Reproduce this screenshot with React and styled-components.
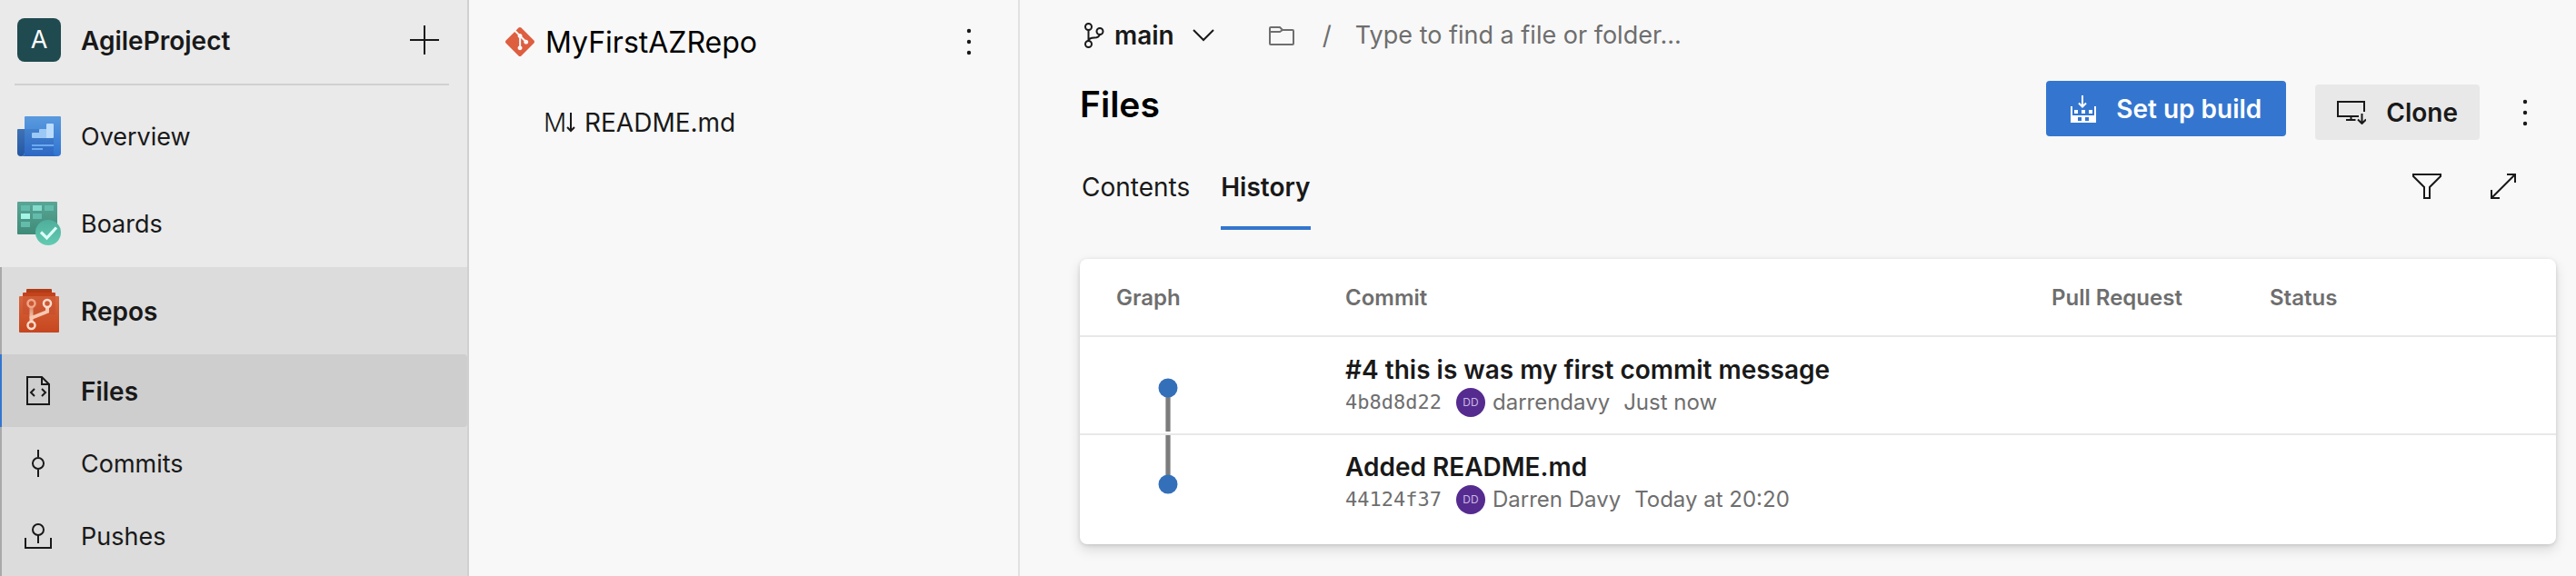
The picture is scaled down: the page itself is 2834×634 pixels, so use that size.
import React from "react";
import styled, { createGlobalStyle, css } from "styled-components";
import { SiGit } from "react-icons/si";

const GlobalStyle = createGlobalStyle`
  *, *::before, *::after { box-sizing: border-box; }
  body {
    margin: 0;
    background: #f8f8f8;
    color: #191919;
    font-family: Inter, "Liberation Sans", sans-serif;
    font-size: 28px;
    line-height: 36px;
  }
  button, input { font: inherit; color: inherit; }
  svg { display: block; flex: none; }
`;

const Page = styled.div`
  display: flex;
  min-height: 100vh;
`;

/* ---------- project sidebar ---------- */

const Sidebar = styled.aside`
  flex: none;
  width: 516px;
  display: flex;
  flex-direction: column;
  background: #eaeaea;
  border-right: 2px solid #d0d0d0;
`;

const ProjectHeader = styled.div`
  display: flex;
  align-items: center;
  height: 94px;
  margin: 0 20px 8px 16px;
  padding: 0 11px 4px 3px;
  border-bottom: 2px solid #d0d0d0;
`;

const ProjectBadge = styled.span`
  display: flex;
  align-items: center;
  justify-content: center;
  width: 48px;
  height: 48px;
  margin-right: 22px;
  border-radius: 8px;
  background: #1f4a4f;
  color: #fff;
  font-size: 27px;
`;

const ProjectName = styled.a`
  flex: 1;
  padding-top: 2px;
  color: inherit;
  font-weight: 600;
  text-decoration: none;
`;

const IconButton = styled.button`
  display: flex;
  align-items: center;
  justify-content: center;
  padding: 0;
  border: 0;
  background: none;
  cursor: pointer;
`;

const NavLink = styled.a`
  display: flex;
  align-items: center;
  height: ${(p) => (p.$sub ? 80 : 96)}px;
  color: inherit;
  font-size: ${(p) => (p.$strong ? 28 : 27)}px;
  font-weight: ${(p) => (p.$strong ? 600 : 400)};
  text-decoration: none;
  border-left: 2px solid transparent;
  ${(p) =>
    p.$current &&
    css`
      background: #cecece;
      border-left-color: #3476cf;
      border-radius: 0 4px 4px 0;
    `}
`;

const NavIcon = styled.span`
  display: flex;
  justify-content: center;
  width: ${(p) => (p.$sub ? 80 : 82)}px;
  margin-right: ${(p) => (p.$sub ? 7 : 5)}px;
`;

const NavLabel = styled.span`
  padding-top: 2px;
`;

const NavGroup = styled.div`
  flex: 1;
  background: linear-gradient(to right, #a9a9a9 2px, #dcdcdc 2px);
`;

/* ---------- file tree ---------- */

const Tree = styled.section`
  flex: none;
  width: 606px;
  border-right: 2px solid #e1e1e1;
`;

const RepoHeader = styled.div`
  display: flex;
  align-items: center;
  height: 92px;
  padding: 0 51px 0 40px;
`;

const RepoName = styled.h2`
  flex: 1;
  margin: 0 0 0 12px;
  padding-top: 2px;
  color: #000;
  font-size: 32px;
  font-weight: 400;
`;

const FileLink = styled.a`
  display: flex;
  align-items: center;
  height: 86px;
  padding-left: 82px;
  color: inherit;
  text-decoration: none;
`;

const MarkdownMark = styled.span`
  display: flex;
  align-items: center;
  width: 34px;
  margin-right: 11px;
  font-weight: 300;
`;

/* ---------- main column ---------- */

const Main = styled.main`
  flex: 1;
  min-width: 0;
  padding: 0 22px 35px 66px;
`;

const PathBar = styled.div`
  display: flex;
  align-items: center;
  height: 78px;
  color: #6e6e6e;
`;

const BranchButton = styled.button`
  display: flex;
  align-items: center;
  margin-right: 60px;
  padding: 0 0 0 5px;
  border: 0;
  background: none;
  color: #191919;
  font-weight: 600;
  cursor: pointer;
`;

const BranchName = styled.span`
  margin: 0 20px 0 11px;
`;

const Slash = styled.span`
  margin: 0 26px 0 31px;
`;

const PathInput = styled.input`
  flex: 1;
  min-width: 0;
  padding: 0;
  border: 0;
  outline: 0;
  background: none;
  font-size: 27px;
  &::placeholder { color: #6e6e6e; opacity: 1; }
`;

const TitleBar = styled.div`
  display: flex;
  gap: 32px;
  height: 65px;
  margin-top: 11px;
  padding-right: 16px;
`;

const Title = styled.h1`
  flex: 1;
  margin: 0;
  color: #000;
  font-size: 39px;
  font-weight: 600;
  line-height: 52px;
`;

const Actions = styled.div`
  display: flex;
  align-self: ${(p) => (p.$low ? "flex-end" : "flex-start")};
  align-items: center;
  gap: 32px;
`;

const Button = styled.button`
  display: flex;
  align-items: center;
  height: 61px;
  gap: 22px;
  padding: 0 ${(p) => (p.$primary ? 27 : 24)}px;
  border: 0;
  border-radius: 4px;
  background: ${(p) => (p.$primary ? "#3476cf" : "#e8e8e8")};
  color: ${(p) => (p.$primary ? "#fff" : "#191919")};
  font-weight: 600;
  white-space: nowrap;
  cursor: pointer;
`;

const ButtonMenu = styled(IconButton)`
  width: 36px;
  height: 61px;
`;

const TabBar = styled.div`
  display: flex;
  height: 90px;
  margin-top: 9px;
  padding: 0 44px 0 2px;
`;

const TabList = styled.div`
  display: flex;
  flex: 1;
  gap: 34px;
`;

const Tab = styled.button`
  height: 90px;
  padding: 0;
  border: 0;
  border-bottom: 4px solid ${(p) => (p.$active ? "#3476cf" : "transparent")};
  background: none;
  font-weight: ${(p) => (p.$active ? 600 : 400)};
  cursor: pointer;
`;

const TabTools = styled.div`
  display: flex;
  height: 84px;
  gap: 54px;
`;

/* ---------- commit table ---------- */

const Card = styled.section`
  margin-top: 32px;
  padding-bottom: 16px;
  border-radius: 8px;
  background: #fff;
  box-shadow: 0 6px 14px rgba(0, 0, 0, 0.13), 0 1px 4px rgba(0, 0, 0, 0.13);
`;

const CommitTable = styled.table`
  width: 100%;
  table-layout: fixed;
  border-spacing: 0;
`;

const HeadCell = styled.th`
  width: ${(p) => p.$width || "auto"};
  height: 86px;
  padding: 2px 0 0 40px;
  border-bottom: 2px solid #e8e8e8;
  color: #6e6e6e;
  font-size: 24px;
  font-weight: 600;
  text-align: left;
`;

const Cell = styled.td`
  height: 106px;
  padding: 0 0 0 40px;
  tr + tr > & { border-top: 2px solid #e8e8e8; }
`;

const Message = styled.a`
  display: block;
  margin-bottom: 2px;
  color: inherit;
  font-weight: 600;
  text-decoration: none;
`;

const Meta = styled.div`
  display: flex;
  align-items: center;
  height: 32px;
  color: #6e6e6e;
  font-size: 24px;
`;

const Hash = styled.a`
  margin-right: 16px;
  color: inherit;
  font-family: "DejaVu Sans Mono", "Liberation Mono", monospace;
  font-size: 22px;
  text-decoration: none;
`;

const Avatar = styled.span`
  display: flex;
  align-items: center;
  justify-content: center;
  width: 32px;
  height: 32px;
  margin-right: 8px;
  border-radius: 50%;
  background: #552b90;
  color: #c9b8e0;
  font-size: 12px;
`;

const Author = styled.span`
  margin-right: 15px;
`;

/* ---------- icons ---------- */

const Line = ({ w, h, stroke = 2, children }) => (
  <svg width={w} height={h} viewBox={`0 0 ${w} ${h}`} fill="none" stroke="currentColor" strokeWidth={stroke} aria-hidden="true">
    {children}
  </svg>
);

const PlusIcon = () => <Line w={32} h={32}><path d="M16 0V32M0 16H32" /></Line>;

const MoreIcon = () => (
  <svg width="6" height="30" viewBox="0 0 6 30" fill="currentColor" aria-hidden="true">
    <circle cx="3" cy="3" r="2.2" /><circle cx="3" cy="15" r="2.2" /><circle cx="3" cy="27" r="2.2" />
  </svg>
);

const OverviewIcon = () => (
  <svg width="48" height="44" viewBox="0 0 48 44" aria-hidden="true">
    <defs>
      <linearGradient id="ovPage" x2="0" y2="1"><stop stopColor="#5a9ade" /><stop offset="1" stopColor="#3074d2" /></linearGradient>
      <linearGradient id="ovFront" x2="0" y2="1"><stop stopColor="#4481cc" /><stop offset="1" stopColor="#2c67c4" /></linearGradient>
      <linearGradient id="ovRoll" x2="0" y2="1"><stop stopColor="#3f72b4" /><stop offset="1" stopColor="#2357a4" /></linearGradient>
    </defs>
    <path d="M1 14H8V40A4 4 0 0 1 0 40V15A1 1 0 0 1 1 14Z" fill="url(#ovRoll)" />
    <path d="M9 0H47A1 1 0 0 1 48 1V40A4 4 0 0 1 44 44H8V1A1 1 0 0 1 9 0Z" fill="url(#ovPage)" />
    <path d="M8 14H40V40A4 4 0 0 0 44 44H4A4 4 0 0 0 8 40Z" fill="url(#ovFront)" />
    <path d="M16 19A1 1 0 0 1 17 18H24V15A1 1 0 0 1 25 14H32V24H17A1 1 0 0 1 16 23Z" fill="#9cc8f6" />
    <path d="M32 9A1 1 0 0 1 33 8H39A1 1 0 0 1 40 9V23A1 1 0 0 1 39 24H32Z" fill="#bcdcfb" />
    <path d="M16 31H40V33H16ZM16 35H28V37H16Z" fill="#6caaf0" />
  </svg>
);

const BoardsIcon = () => (
  <svg width="48" height="48" viewBox="0 0 48 48" aria-hidden="true">
    <defs>
      <linearGradient id="bdBoard" x2="0" y2="1"><stop stopColor="#5aa596" /><stop offset="1" stopColor="#3f8b78" /></linearGradient>
      <linearGradient id="bdCheck" x2="0" y2="1"><stop stopColor="#4fae9b" /><stop offset="1" stopColor="#62cbb2" /></linearGradient>
    </defs>
    <rect width="44" height="36" rx="1" fill="url(#bdBoard)" />
    <path d="M4 4H14V10H4ZM30 4H40V10H30ZM17 13H27V19H17ZM4 22H14V28H4Z" fill="#63bcab" />
    <path d="M17 4H27V10H17Z" fill="#83dccb" />
    <path d="M4 13H14V19H4Z" fill="#a5f5e6" />
    <circle cx="34" cy="34" r="14" fill="url(#bdCheck)" />
    <path d="M26 33.5L32.500 40L43 28.500" fill="none" stroke="#dcfff8" strokeWidth="3.200" />
  </svg>
);

const ReposIcon = () => (
  <svg width="44" height="48" viewBox="0 0 44 48" aria-hidden="true">
    <defs>
      <linearGradient id="rpBody" x2="0" y2="1"><stop stopColor="#d8663c" /><stop offset="1" stopColor="#c6461e" /></linearGradient>
      <linearGradient id="rpStem" x2="0" y2="1"><stop stopColor="#d98a68" /><stop offset="1" stopColor="#f5c9b4" /></linearGradient>
    </defs>
    <path d="M8 4V1A1 1 0 0 1 9 0H35A1 1 0 0 1 36 1V4Z" fill="#b03c17" />
    <path d="M4 8V5A1 1 0 0 1 5 4H39A1 1 0 0 1 40 5V8Z" fill="#c3431b" />
    <rect y="8" width="44" height="40" rx="1" fill="url(#rpBody)" />
    <rect x="4" y="8" width="36" height="20" fill="#b8402a" opacity=".25" />
    <rect x="11.500" y="20" width="4" height="12" fill="url(#rpStem)" />
    <g fill="none" strokeWidth="2.500">
      <circle cx="13.500" cy="16" r="4" stroke="#f0a688" />
      <path d="M31 20V25L13.500 32V36" stroke="#f7c8b2" strokeWidth="4" />
      <circle cx="31" cy="16" r="4" stroke="#fbdccd" />
      <circle cx="13.500" cy="40" r="4" stroke="#fbdccd" />
    </g>
  </svg>
);

const FilesIcon = () => (
  <Line w={26} h={32}><path d="M1 1H17L25 9V31H1ZM17 1V9H25M9 14L5 18L9 22M17 14L21 18L17 22" /></Line>
);
const CommitIcon = () => (
  <Line w={14} h={30}><path d="M7 0V8M7 22V30" /><circle cx="7" cy="15" r="6" /></Line>
);
const PushIcon = () => (
  <Line w={30} h={28}><circle cx="15" cy="7" r="6" /><path d="M15 13V22M1 16V27H29V16" /></Line>
);
const DownIcon = () => <Line w={10} h={22}><path d="M5 0V20M1 16L5 20L9 16" /></Line>;
const BranchIcon = () => (
  <Line w={22} h={28}>
    <circle cx="4.500" cy="4.500" r="3.500" /><circle cx="4.500" cy="23.500" r="3.500" /><circle cx="17" cy="9.500" r="3.500" />
    <path d="M4.500 8V20M17 13C16 16 14 16.500 11 16.500C7 16.500 5 17 4.500 20" />
  </Line>
);
const ChevronIcon = () => <Line w={24} h={14}><path d="M1 1L12 12L23 1" /></Line>;
const FolderIcon = () => (
  <Line w={28} h={21}><path d="M2 1H12L15 4H26Q27 4 27 5V19Q27 20 26 20H2Q1 20 1 19V2Q1 1 2 1ZM1 6H12L15 4" /></Line>
);
const BuildIcon = () => (
  <svg width="28" height="30" viewBox="0 0 28 30" fill="currentColor" aria-hidden="true">
    <path d="M13 0V12.500M9 8.500L13 12.500L17 8.500" fill="none" stroke="currentColor" strokeWidth="2" />
    <path d="M4 16H8V20H4ZM12 16H16V20H12ZM20 16H24V20H20Z" />
    <path fillRule="evenodd" d="M0 12H2V22H26V12H28V30H0ZM8 24V28H12V24ZM16 24V28H20V24Z" />
  </svg>
);
const CloneIcon = () => (
  <Line w={32} h={26}><path d="M30 12V1H1V17H24M15.500 17V21M10 21H20.500M27.500 14V25M23 20.500L27.500 25L32 20.500" /></Line>
);
const FilterIcon = () => <Line w={32} h={28}><path d="M1 1H31V3L19 15V27H13V15L1 3Z" /></Line>;
const ExpandIcon = () => <Line w={28} h={28}><path d="M1 27L27 1M18 1H27V10M1 18V27H10" /></Line>;

const GraphNode = ({ last }) => {
  const h = last ? 104 : 106;
  const cy = last ? 54 : 56;
  return (
    <svg width="114" height={h} viewBox={`0 0 114 ${h}`} aria-hidden="true">
      <rect x="54" y={last ? 0 : cy} width="6" height={last ? cy : 48} fill="#b0b0b0" />
      <rect x="55" y={last ? 0 : cy} width="4" height={last ? cy : 48} fill="#7c7c7c" />
      <circle cx="57" cy={cy} r="10.500" fill="#3470ba" />
    </svg>
  );
};

/* ---------- page ---------- */

const commits = [
  { message: "#4 this is was my first commit message", hash: "4b8d8d22", author: "darrendavy", when: "Just now" },
  { message: "Added README.md", hash: "44124f37", author: "Darren Davy", when: "Today at 20:20" },
];

const NavItem = ({ icon, label, ...rest }) => (
  <NavLink href="#" {...rest}>
    <NavIcon $sub={rest.$sub}>{icon}</NavIcon>
    <NavLabel>{label}</NavLabel>
  </NavLink>
);

export default function App() {
  return (
    <>
      <GlobalStyle />
      <Page>
        <Sidebar>
          <ProjectHeader>
            <ProjectBadge>A</ProjectBadge>
            <ProjectName href="#">AgileProject</ProjectName>
            <IconButton aria-label="Add"><PlusIcon /></IconButton>
          </ProjectHeader>
          <nav>
            <NavItem icon={<OverviewIcon />} label="Overview" />
            <NavItem icon={<BoardsIcon />} label="Boards" />
          </nav>
          <NavGroup as="nav">
            <NavItem icon={<ReposIcon />} label="Repos" $strong />
            <NavItem icon={<FilesIcon />} label="Files" $sub $strong $current />
            <NavItem icon={<CommitIcon />} label="Commits" $sub />
            <NavItem icon={<PushIcon />} label="Pushes" $sub />
          </NavGroup>
        </Sidebar>

        <Tree>
          <RepoHeader>
            <SiGit size={32} color="#de5e40" aria-hidden="true" />
            <RepoName>MyFirstAZRepo</RepoName>
            <IconButton aria-label="Repository actions"><MoreIcon /></IconButton>
          </RepoHeader>
          <FileLink href="#">
            <MarkdownMark aria-hidden="true">M<DownIcon /></MarkdownMark>
            README.md
          </FileLink>
        </Tree>

        <Main>
          <PathBar>
            <BranchButton>
              <BranchIcon />
              <BranchName>main</BranchName>
              <ChevronIcon />
            </BranchButton>
            <FolderIcon />
            <Slash>/</Slash>
            <PathInput aria-label="Path" placeholder="Type to find a file or folder..." />
          </PathBar>

          <TitleBar>
            <Title>Files</Title>
            <Actions>
              <Button $primary><BuildIcon />Set up build</Button>
            </Actions>
            <Actions $low>
              <Button><CloneIcon />Clone</Button>
              <ButtonMenu aria-label="More actions"><MoreIcon /></ButtonMenu>
            </Actions>
          </TitleBar>

          <TabBar>
            <TabList role="tablist">
              <Tab role="tab" aria-selected="false">Contents</Tab>
              <Tab role="tab" aria-selected="true" $active>History</Tab>
            </TabList>
            <TabTools>
              <IconButton aria-label="Filter"><FilterIcon /></IconButton>
              <IconButton aria-label="Full screen"><ExpandIcon /></IconButton>
            </TabTools>
          </TabBar>

          <Card>
            <CommitTable>
              <thead>
                <tr>
                  <HeadCell $width="252px">Graph</HeadCell>
                  <HeadCell>Commit</HeadCell>
                  <HeadCell $width="240px">Pull Request</HeadCell>
                  <HeadCell $width="355px">Status</HeadCell>
                </tr>
              </thead>
              <tbody>
                {commits.map((c, i) => (
                  <tr key={c.hash}>
                    <Cell><GraphNode last={i === commits.length - 1} /></Cell>
                    <Cell>
                      <Message href="#">{c.message}</Message>
                      <Meta>
                        <Hash href="#">{c.hash}</Hash>
                        <Avatar>DD</Avatar>
                        <Author>{c.author}</Author>
                        <span>{c.when}</span>
                      </Meta>
                    </Cell>
                    <Cell />
                    <Cell />
                  </tr>
                ))}
              </tbody>
            </CommitTable>
          </Card>
        </Main>
      </Page>
    </>
  );
}
